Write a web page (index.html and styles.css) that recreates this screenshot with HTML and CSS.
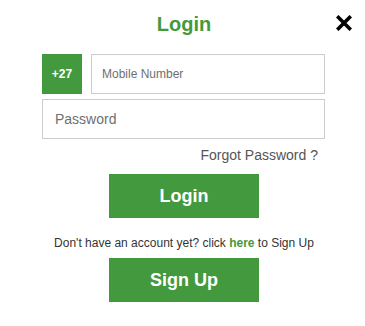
FILE: index.html
```html
<!DOCTYPE html>
<html lang="en">
<head>
<meta charset="utf-8">
<title>Login</title>
<link rel="stylesheet" href="styles.css">
</head>
<body>
<div class="modal">
  <button class="close" type="button" aria-label="Close">
    <svg width="16" height="16" viewBox="0 0 16 16"><path d="M2.5 2.5 L13.5 13.5 M13.5 2.5 L2.5 13.5" stroke="#000" stroke-width="3.6" stroke-linecap="square" fill="none"/></svg>
  </button>
  <h2 class="title">Login</h2>
  <form class="form">
    <div class="phone-row">
      <span class="prefix">+27</span>
      <input class="field field-mobile" type="text" placeholder="Mobile Number">
    </div>
    <input class="field field-pass" type="password" placeholder="Password">
    <div class="forgot">Forgot Password ?</div>
    <button class="btn" type="button">Login</button>
    <p class="signup-text">Don't have an account yet? click <a class="here" href="#">here</a> to Sign Up</p>
    <button class="btn" type="button">Sign Up</button>
  </form>
</div>
</body>
</html>
```
FILE: styles.css
```css
* { box-sizing: border-box; }
html, body { margin: 0; padding: 0; background: #fff; }
body { font-family: "Liberation Sans", Arial, sans-serif; }

.modal {
  position: relative;
  width: 365px;
  padding: 13px 40px 0 42px;
}

.close {
  position: absolute;
  top: 15px;
  left: 336px;
  width: 16px;
  height: 16px;
  padding: 0;
  border: 0;
  background: none;
  display: block;
}
.close svg { display: block; }

.title {
  margin: 0;
  text-align: center;
  font-size: 20px;
  line-height: 22px;
  font-weight: bold;
  color: #43993d;
  padding-left: 1px;
}

.form {
  display: flex;
  flex-direction: column;
  margin-top: 19px;
}

.phone-row {
  display: flex;
  gap: 9px;
  height: 40px;
}

.prefix {
  width: 40px;
  height: 40px;
  background: #43993d;
  color: #fff;
  font-size: 12px;
  font-weight: bold;
  display: flex;
  align-items: center;
  justify-content: center;
}

.field {
  height: 40px;
  border: 1px solid #cccccc;
  background: #fff;
  font-family: "Liberation Sans", Arial, sans-serif;
  color: #555;
  outline: none;
  margin: 0;
}
.field-mobile {
  flex: 1;
  min-width: 0;
  padding: 0 10px;
  font-size: 12px;
}
.field-pass {
  margin-top: 5px;
  padding: 0 12px;
  font-size: 14px;
}
.field::placeholder { color: #6f6f6f; opacity: 1; }

.forgot {
  margin-top: 8px;
  text-align: right;
  padding-right: 7px;
  font-size: 14px;
  line-height: 17px;
  color: #555;
}

.btn {
  align-self: center;
  width: 150px;
  height: 44px;
  margin: 10px 0 0 1px;
  border: 0;
  background: #43993d;
  color: #fff;
  font-family: "Liberation Sans", Arial, sans-serif;
  font-size: 18px;
  font-weight: bold;
  padding: 0;
}

.signup-text {
  margin: 18px 0 0;
  text-align: center;
  font-size: 12px;
  line-height: 14px;
  color: #333;
  padding-left: 1px;
}
.signup-text + .btn { margin-top: 8px; }

.here {
  color: #43993d;
  font-weight: bold;
  text-decoration: none;
}
```
